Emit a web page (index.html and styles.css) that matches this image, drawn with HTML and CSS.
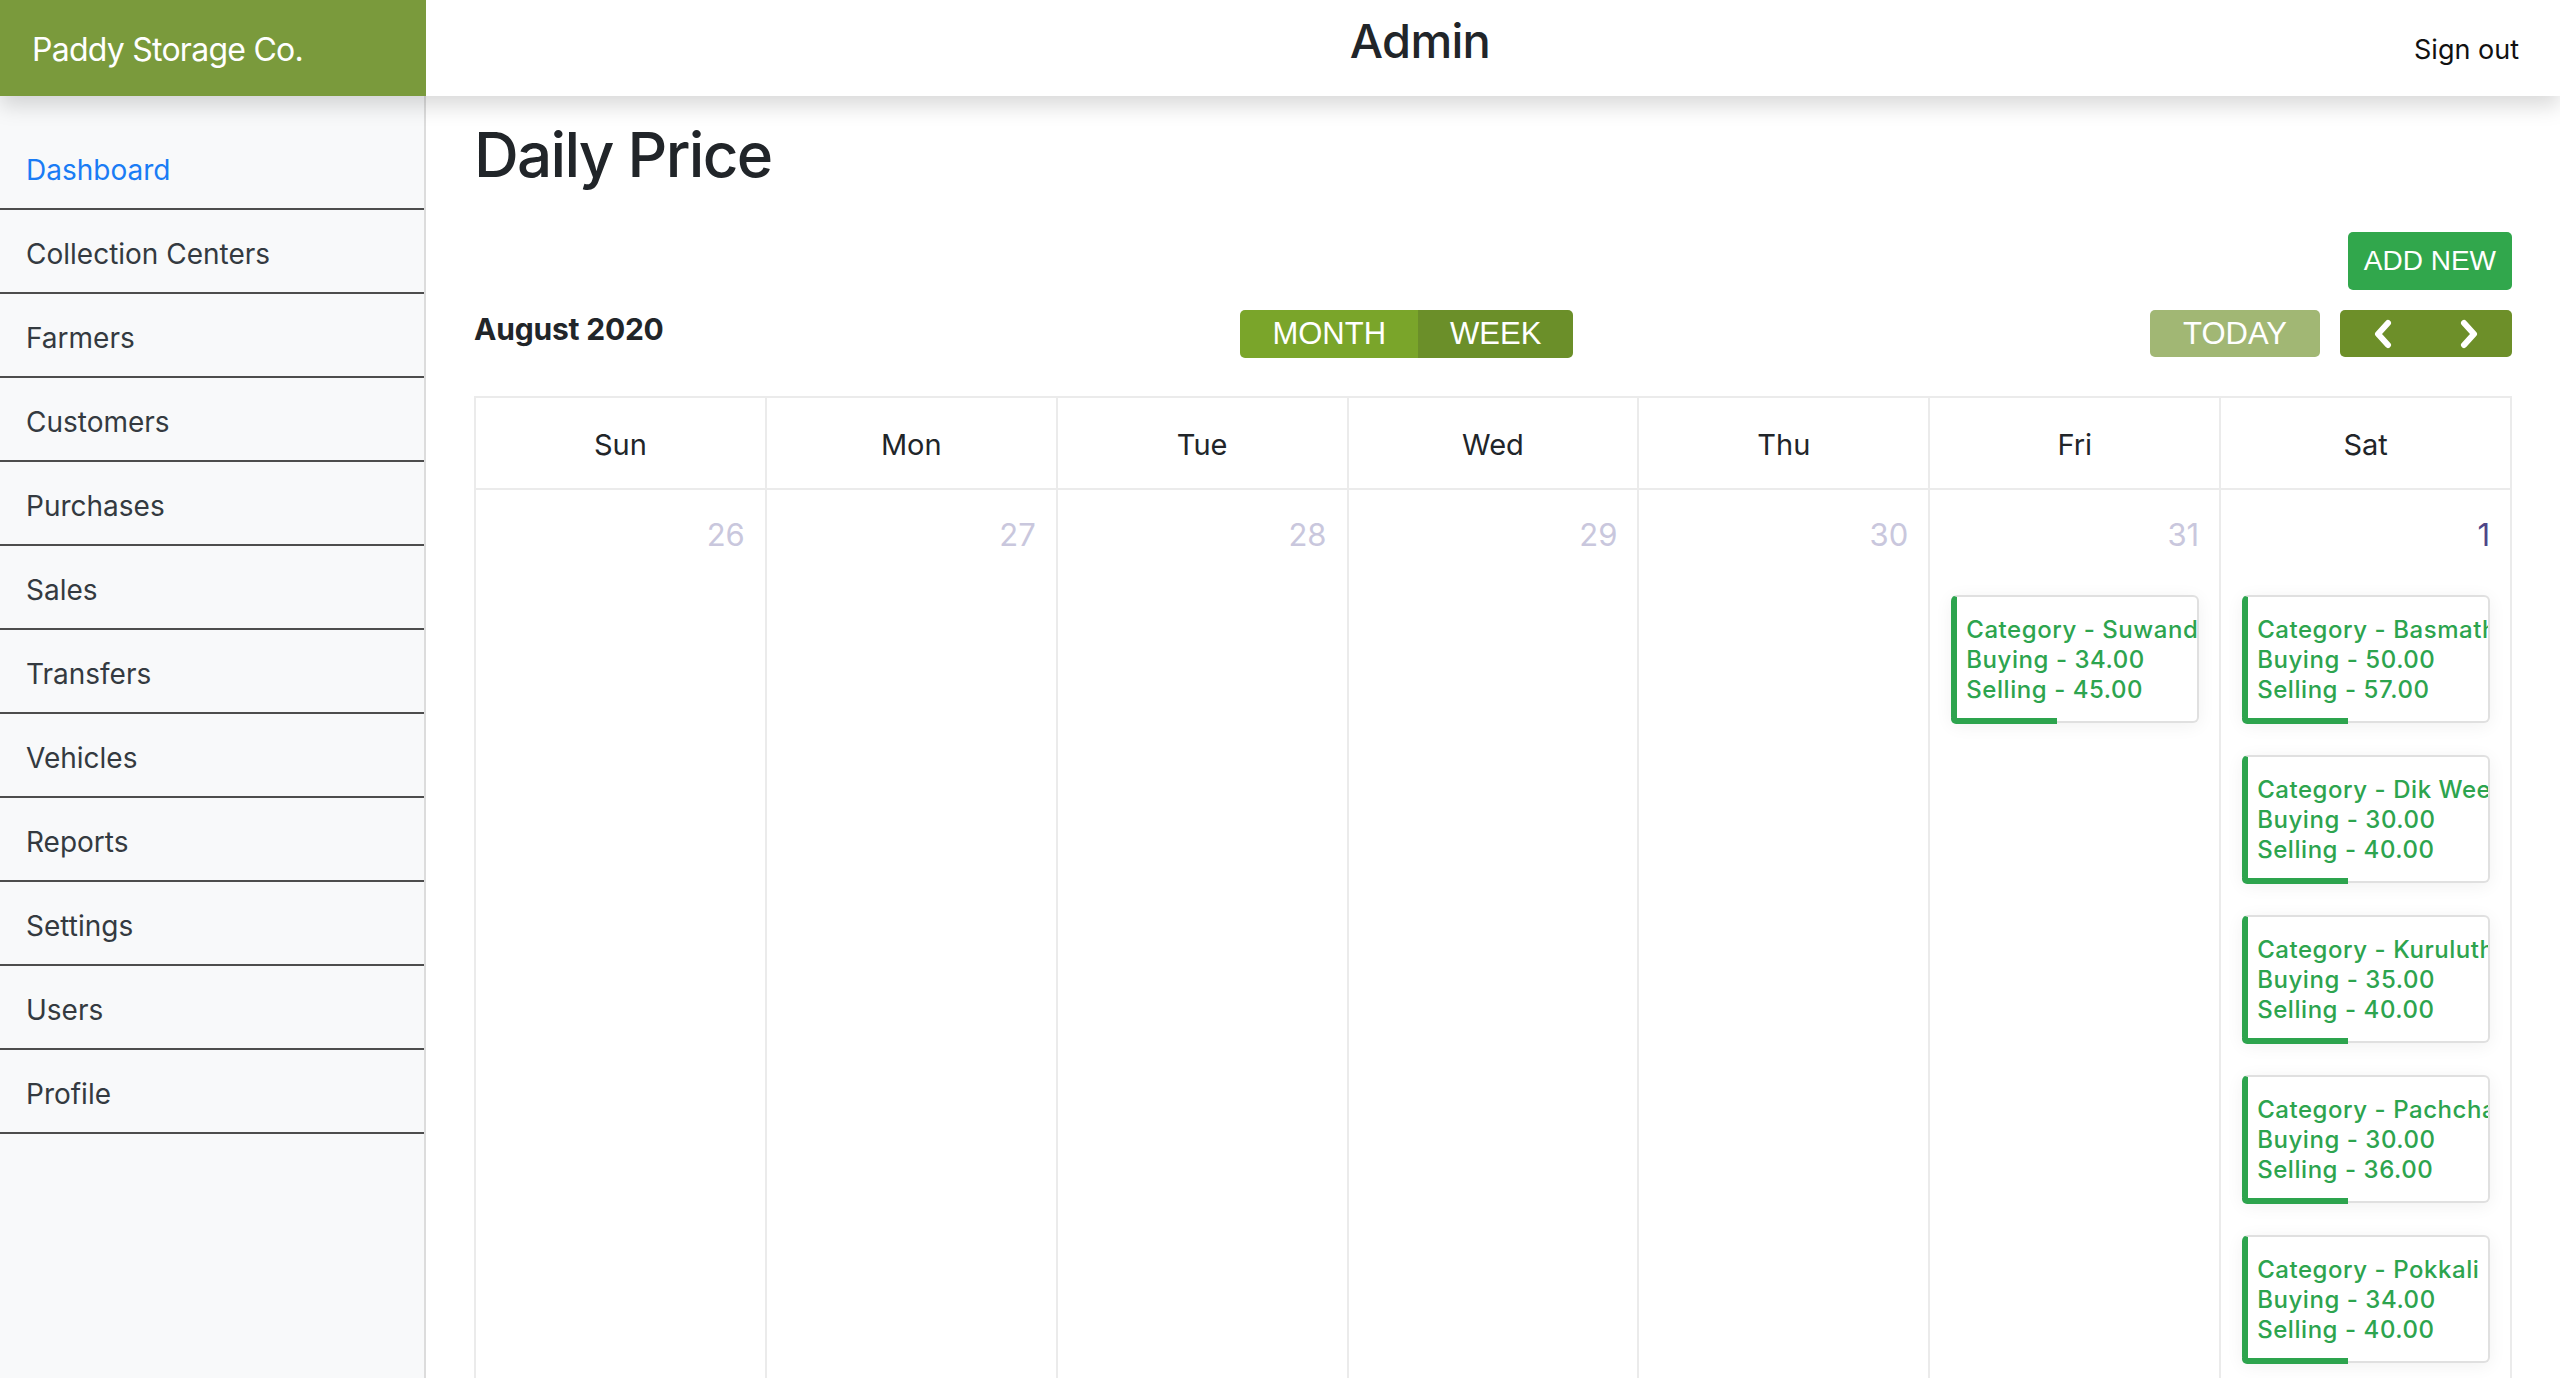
FILE: index.html
```html
<!DOCTYPE html>
<html lang="en">
<head>
<meta charset="utf-8">
<title>Daily Price</title>
<link rel="stylesheet" href="styles.css">
</head>
<body>
<header class="topbar">
  <div class="brand">Paddy Storage Co.</div>
  <div class="title">Admin</div>
  <a class="signout" href="#">Sign out</a>
</header>
<div class="layout">
  <nav class="sidebar">
    <ul class="nav">
      <li><a class="active" href="#">Dashboard</a></li>
      <li><a href="#">Collection Centers</a></li>
      <li><a href="#">Farmers</a></li>
      <li><a href="#">Customers</a></li>
      <li><a href="#">Purchases</a></li>
      <li><a href="#">Sales</a></li>
      <li><a href="#">Transfers</a></li>
      <li><a href="#">Vehicles</a></li>
      <li><a href="#">Reports</a></li>
      <li><a href="#">Settings</a></li>
      <li><a href="#">Users</a></li>
      <li><a href="#">Profile</a></li>
    </ul>
  </nav>
  <main class="main">
    <h1 class="page-title">Daily Price</h1>
    <div class="actions"><button class="btn-add">ADD NEW</button></div>
    <div class="toolbar">
      <h2 class="month-title">August 2020</h2>
      <div class="group">
        <button class="tbtn month">MONTH</button><button class="tbtn week">WEEK</button>
      </div>
      <div class="right">
        <button class="tbtn today">TODAY</button>
        <div class="group navgrp">
          <button class="tbtn arrow" aria-label="prev"><svg width="20" height="30" viewBox="0 0 20 30"><polyline points="15,4 5,15 15,26" fill="none" stroke="#fff" stroke-width="6" stroke-linecap="round" stroke-linejoin="round"/></svg></button>
          <button class="tbtn arrow" aria-label="next"><svg width="20" height="30" viewBox="0 0 20 30"><polyline points="5,4 15,15 5,26" fill="none" stroke="#fff" stroke-width="6" stroke-linecap="round" stroke-linejoin="round"/></svg></button>
        </div>
      </div>
    </div>
    <div class="calendar">
      <div class="cal-row cal-head">
        <div class="hcell">Sun</div><div class="hcell">Mon</div><div class="hcell">Tue</div><div class="hcell">Wed</div><div class="hcell">Thu</div><div class="hcell">Fri</div><div class="hcell">Sat</div>
      </div>
      <div class="cal-row cal-week">
        <div class="dcell"><div class="dnum other">26</div></div>
        <div class="dcell"><div class="dnum other">27</div></div>
        <div class="dcell"><div class="dnum other">28</div></div>
        <div class="dcell"><div class="dnum other">29</div></div>
        <div class="dcell"><div class="dnum other">30</div></div>
        <div class="dcell"><div class="dnum other">31</div>
          <div class="ev"><div class="ev-text">Category - Suwandel<br>Buying - 34.00<br>Selling - 45.00</div></div>
        </div>
        <div class="dcell"><div class="dnum">1</div>
          <div class="ev"><div class="ev-text">Category - Basmathi<br>Buying - 50.00<br>Selling - 57.00</div></div>
          <div class="ev"><div class="ev-text">Category - Dik Wee<br>Buying - 30.00<br>Selling - 40.00</div></div>
          <div class="ev"><div class="ev-text">Category - Kuruluthudu<br>Buying - 35.00<br>Selling - 40.00</div></div>
          <div class="ev"><div class="ev-text">Category - Pachchaperumal<br>Buying - 30.00<br>Selling - 36.00</div></div>
          <div class="ev"><div class="ev-text">Category - Pokkali<br>Buying - 34.00<br>Selling - 40.00</div></div>
        </div>
      </div>
    </div>
  </main>
</div>
</body>
</html>
```
FILE: styles.css
```css
html, body {
  margin: 0;
  height: 100%;
}
body {
  font-family: Inter, "Noto Sans", sans-serif;
  color: #212529;
  display: flex;
  flex-direction: column;
  overflow: hidden;
  background: #fff;
}

/* Top bar */
.topbar {
  height: 96px;
  flex-shrink: 0;
  display: flex;
  align-items: flex-start;
  background: #fff;
  box-shadow: 0 10px 20px rgba(0, 0, 0, 0.15);
  position: relative;
  z-index: 2;
}
.brand {
  width: 426px;
  height: 96px;
  box-sizing: border-box;
  background: #7a9a3c;
  color: #fff;
  font-size: 32px;
  line-height: 40px;
  padding: 30px 0 0 32px;
  letter-spacing: -0.75px;
}
.title {
  flex: 1;
  text-align: center;
  font-size: 47px;
  font-weight: 500;
  line-height: 60px;
  margin-top: 11px;
  letter-spacing: -0.7px;
}
.signout {
  font-size: 27px;
  line-height: 40px;
  margin-top: 30px;
  padding-right: 41px;
  color: #111;
  text-decoration: none;
}

/* Layout */
.layout {
  flex: 1;
  display: flex;
  min-height: 0;
}
.sidebar {
  width: 424px;
  flex-shrink: 0;
  background: #f8f9fa;
  border-right: 2px solid #dcdcdc;
  padding-top: 30px;
}
.nav {
  list-style: none;
  margin: 0;
  padding: 0;
}
.nav a {
  display: block;
  height: 76px;
  padding: 6px 0 0 26px;
  line-height: 76px;
  font-size: 28px;
  color: #343a40;
  text-decoration: none;
  border-bottom: 2px solid #4d4d4d;
}
.nav a.active {
  color: #1a7cf5;
}

/* Main */
.main {
  flex: 1;
  min-width: 0;
  padding: 21px 48px 0 48px;
  overflow: hidden;
}
.page-title {
  margin: 0;
  font-size: 62px;
  line-height: 76px;
  font-weight: 500;
  letter-spacing: -1.7px;
}
.actions {
  display: flex;
  justify-content: flex-end;
  margin-top: 39px;
}
.btn-add {
  height: 58px;
  padding: 0 16px;
  border: 0;
  border-radius: 5px;
  background: #31a74c;
  color: #fff;
  font-family: "Liberation Sans", Arial, sans-serif;
  font-size: 28px;
}
.toolbar {
  margin-top: 20px;
  height: 48px;
  display: flex;
  justify-content: space-between;
  align-items: flex-start;
}
.month-title {
  margin: 0;
  font-size: 30px;
  line-height: 38px;
  font-weight: 700;
  letter-spacing: -0.2px;
}
.group {
  display: flex;
  border-radius: 5px;
  overflow: hidden;
}
.tbtn {
  height: 48px;
  padding: 0 32px;
  border: 0;
  color: #fff;
  font-family: "Liberation Sans", Arial, sans-serif;
  font-size: 31px;
  display: flex;
  align-items: center;
  justify-content: center;
}
.month { background: #7aa52a; }
.week { background: #6b8f29; }
.right {
  display: flex;
  gap: 20px;
}
.today {
  height: 47px;
  padding: 0 33px;
  border-radius: 5px;
  background: #a1b774;
}
.navgrp .arrow {
  width: 86px;
  height: 47px;
  padding: 0;
  background: #6d8f29;
}

/* Calendar */
.calendar {
  margin-top: 38px;
  border-top: 2px solid #ebebeb;
  border-left: 2px solid #ebebeb;
}
.cal-row {
  display: grid;
  grid-template-columns: repeat(7, 1fr);
}
.hcell {
  height: 92px;
  border-right: 2px solid #ebebeb;
  border-bottom: 2px solid #ebebeb;
  display: flex;
  align-items: center;
  justify-content: center;
  font-size: 29px;
  padding-top: 2px;
  box-sizing: border-box;
}
.dcell {
  min-height: 1000px;
  border-right: 2px solid #ebebeb;
  padding: 26px 20px 0 21px;
  min-width: 0;
}
.dnum {
  text-align: right;
  font-size: 31px;
  line-height: 38px;
  color: #4f4688;
}
.dnum.other {
  color: #c9c7dd;
}
.ev {
  position: relative;
  margin-top: 41px;
  background: #fff;
  border: 2px solid #e0e0e0;
  border-left: 6px solid #2da44e;
  border-radius: 6px;
  box-shadow: 0 3px 18px rgba(0, 0, 0, 0.06);
}
.ev + .ev {
  margin-top: 32px;
}
.ev::after {
  content: "";
  position: absolute;
  left: -6px;
  bottom: -3px;
  width: 106px;
  height: 6px;
  background: #2da44e;
  border-bottom-left-radius: 5px;
}
.ev-text {
  overflow: hidden;
  white-space: nowrap;
  padding: 18px 0 16px 9px;
  color: #2da44e;
  font-size: 24px;
  line-height: 30px;
  font-weight: 500;
  letter-spacing: 0.55px;
}
```
